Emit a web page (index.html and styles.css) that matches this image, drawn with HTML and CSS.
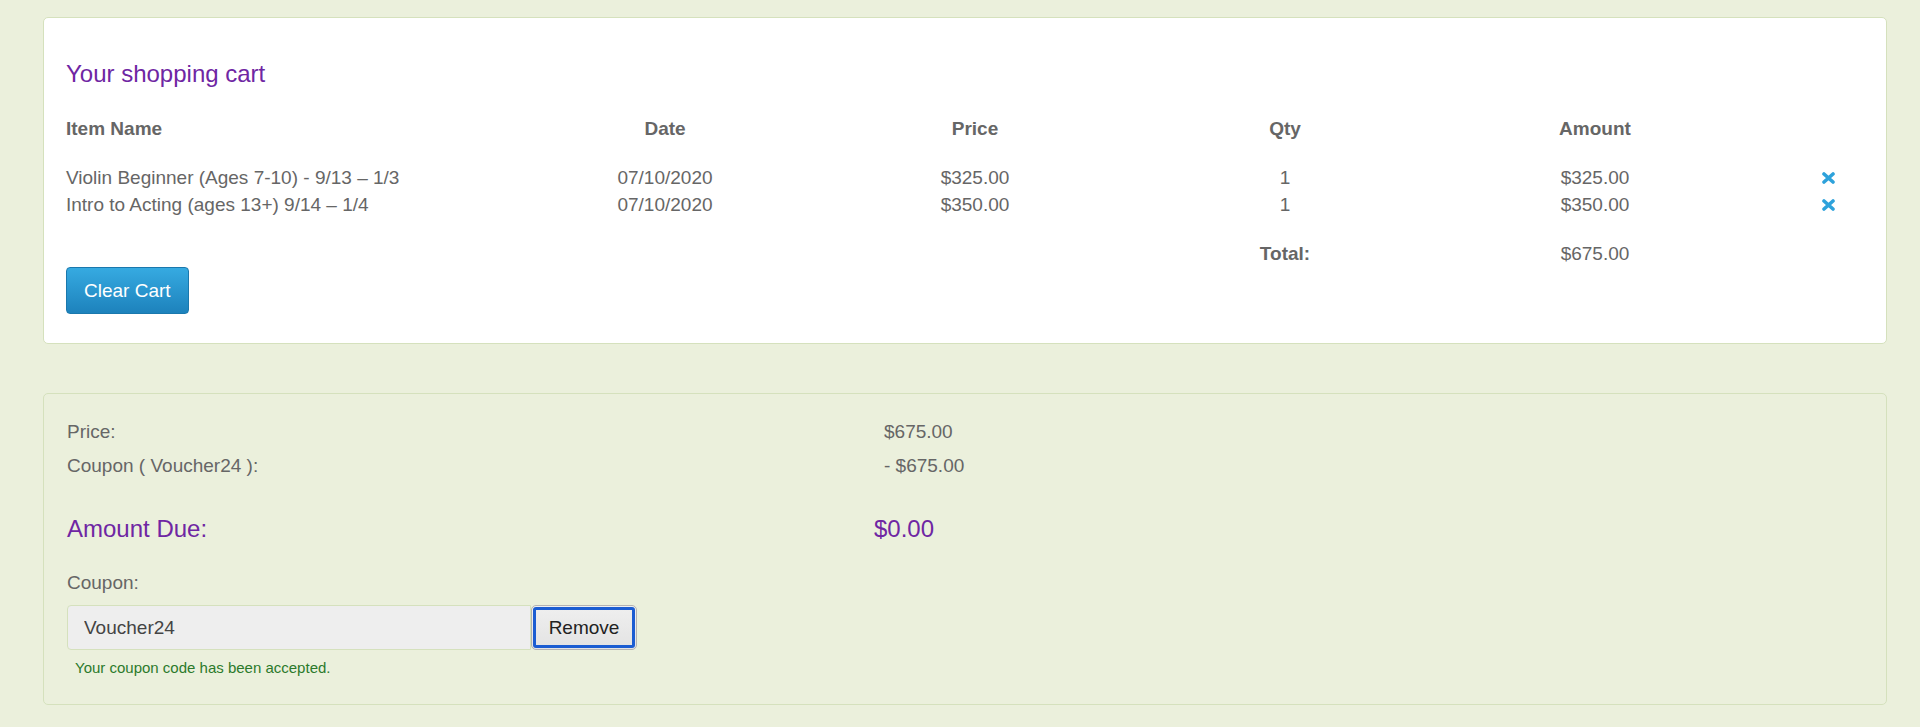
FILE: index.html
```html
<!DOCTYPE html>
<html lang="en">
<head>
    <meta charset="UTF-8">
    <meta name="viewport" content="width=device-width, initial-scale=1.0">
    <title>Shopping Cart</title>
    <link rel="stylesheet" href="styles.css">
</head>
<body>
<div class="page">
    <!-- 장바구니 -->
    <section class="card cart">
        <h2 class="cart-title">Your shopping cart</h2>

        <div class="cart-table">
            <div class="cart-row cart-head">
                <div class="cell cell-name">Item Name</div>
                <div class="cell">Date</div>
                <div class="cell">Price</div>
                <div class="cell cell-qty">Qty</div>
                <div class="cell">Amount</div>
                <div class="cell"></div>
            </div>

            <div class="cart-row">
                <div class="cell cell-name">Violin Beginner (Ages 7-10) - 9/13 – 1/3</div>
                <div class="cell">07/10/2020</div>
                <div class="cell">$325.00</div>
                <div class="cell cell-qty">1</div>
                <div class="cell">$325.00</div>
                <div class="cell cell-remove">
                    <svg class="icon-remove" viewBox="0 0 13 12"><path d="M2 2 L11 10 M11 2 L2 10"/></svg>
                </div>
            </div>

            <div class="cart-row">
                <div class="cell cell-name">Intro to Acting (ages 13+) 9/14 – 1/4</div>
                <div class="cell">07/10/2020</div>
                <div class="cell">$350.00</div>
                <div class="cell cell-qty">1</div>
                <div class="cell">$350.00</div>
                <div class="cell cell-remove">
                    <svg class="icon-remove" viewBox="0 0 13 12"><path d="M2 2 L11 10 M11 2 L2 10"/></svg>
                </div>
            </div>

            <div class="cart-row cart-total">
                <div class="cell cell-name"></div>
                <div class="cell"></div>
                <div class="cell"></div>
                <div class="cell cell-qty bold">Total:</div>
                <div class="cell">$675.00</div>
                <div class="cell"></div>
            </div>
        </div>

        <button class="btn-clear" type="button">Clear Cart</button>
    </section>

    <!-- 결제 요약 -->
    <section class="card summary">
        <div class="summary-row">
            <div class="summary-label">Price:</div>
            <div class="summary-value">$675.00</div>
        </div>
        <div class="summary-row">
            <div class="summary-label">Coupon ( Voucher24 ):</div>
            <div class="summary-value">- $675.00</div>
        </div>

        <div class="summary-row amount-due">
            <div class="summary-label">Amount Due:</div>
            <div class="summary-value">$0.00</div>
        </div>

        <label class="coupon-label" for="coupon">Coupon:</label>
        <div class="coupon-group">
            <input class="coupon-input" id="coupon" type="text" value="Voucher24" readonly>
            <button class="btn-remove" type="button">Remove</button>
        </div>
        <p class="coupon-message">Your coupon code has been accepted.</p>
    </section>
</div>
</body>
</html>
```

FILE: styles.css
```css
* {
    margin: 0;
    padding: 0;
    box-sizing: border-box;
}

body {
    font-family: "Liberation Sans", Arial, Helvetica, sans-serif;
    font-size: 19px;
    color: #666;
    background: #ebf0dc;
}

.page {
    padding: 17px 33px 0 43px;
    display: flex;
    flex-direction: column;
    gap: 49px;
}

.card {
    border: 1px solid #d5e1bd;
    border-radius: 5px;
}

/* 장바구니 카드 */
.cart {
    background: #fff;
    padding: 23px 22px 29px;
}

.cart-title {
    font-size: 24px;
    font-weight: normal;
    line-height: 26px;
    color: #6f26a3;
    margin-top: 20px;
}

.cart-table {
    margin-top: 28px;
}

.cart-row {
    display: grid;
    grid-template-columns: 444px 310px 310px 310px 310px 114px;
    line-height: 27px;
}

.cart-head {
    font-weight: bold;
    margin-bottom: 22px;
}

.cart-total {
    margin-top: 22px;
}

.cell {
    text-align: center;
    white-space: nowrap;
}

.cell-name {
    text-align: left;
}

.cell-remove {
    display: flex;
    align-items: center;
    justify-content: center;
    padding-left: 42px;
}

.icon-remove {
    width: 13px;
    height: 12px;
    fill: none;
    stroke: #2ea2db;
    stroke-width: 3.6;
    stroke-linecap: round;
}

.bold {
    font-weight: bold;
}

.btn-clear {
    display: block;
    height: 47px;
    padding: 0 17px;
    font-family: inherit;
    font-size: 19px;
    color: #fff;
    background: linear-gradient(to bottom, #36aae1, #1d82bc);
    border: 1px solid #1a78ad;
    border-radius: 4px;
    cursor: pointer;
}

/* 결제 요약 카드 */
.summary {
    padding: 21px 23px 26px;
}

.summary-row {
    display: grid;
    grid-template-columns: 817px 1fr;
    line-height: 34px;
}

.amount-due {
    grid-template-columns: 807px 1fr;
    margin-top: 29px;
    font-size: 24px;
    color: #6f26a3;
}

.coupon-label {
    display: block;
    margin-top: 23px;
    line-height: 28px;
}

.coupon-group {
    display: flex;
    margin-top: 8px;
}

.coupon-input {
    width: 464px;
    height: 45px;
    padding: 0 16px;
    font-family: inherit;
    font-size: 19px;
    color: #444;
    background: #eee;
    border: 1px solid #d5e1bd;
    border-radius: 4px 0 0 4px;
    outline: none;
}

.btn-remove {
    width: 106px;
    height: 45px;
    font-family: inherit;
    font-size: 19px;
    color: #222;
    background: linear-gradient(to bottom, #efefef, #e3e3e3);
    border: 1px solid #b3b3b3;
    border-radius: 5px;
    outline: 3px solid #1b5dd2;
    outline-offset: -5px;
    cursor: pointer;
}

.coupon-message {
    margin-top: 8px;
    padding-left: 8px;
    font-size: 15px;
    line-height: 20px;
    color: #2b7a2b;
}
```
